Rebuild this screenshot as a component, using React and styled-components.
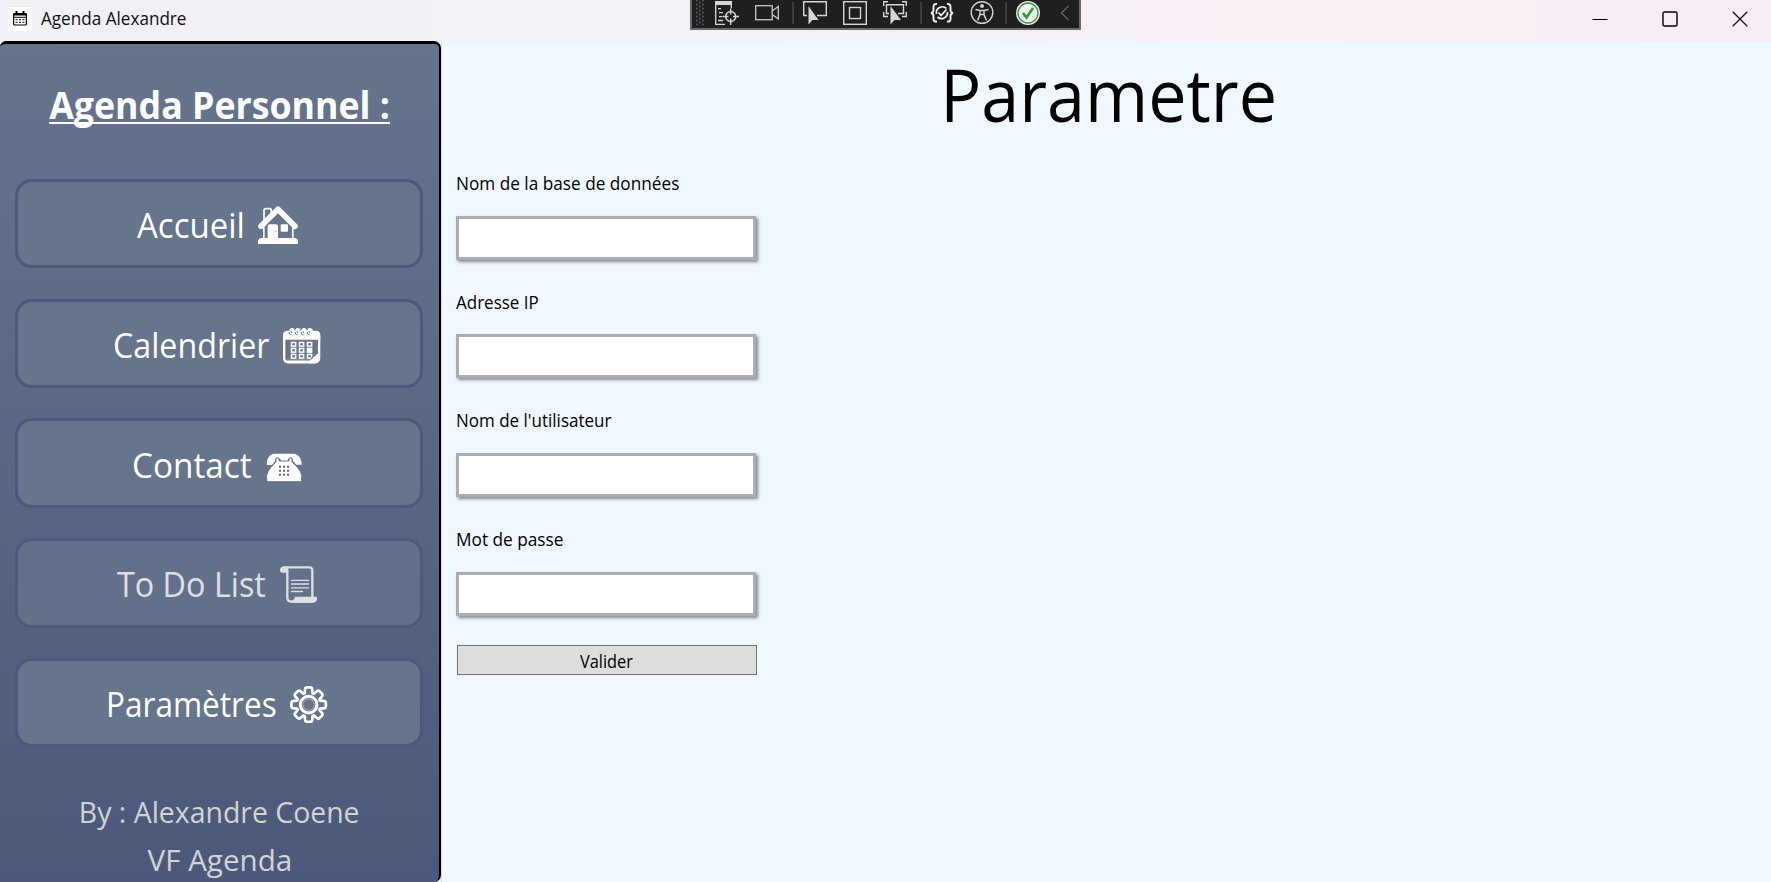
import React from "react";
import styled, { createGlobalStyle } from "styled-components";

const GlobalStyle = createGlobalStyle`
  *, *::before, *::after { box-sizing: border-box; }
  html, body, #root { height: 100%; margin: 0; }
  body {
    overflow: hidden;
    font-family: "Open Sans", "Noto Sans", sans-serif;
    color: #000;
  }
`;

const Window = styled.div`
  display: flex;
  flex-direction: column;
  height: 100vh;
  background: #f0f8ff;
`;

/* Narrows the letterforms without changing their height. */
const Condensed = styled.span`
  display: inline-block;
  white-space: nowrap;
  transform: scaleX(${(p) => p.$fit});
  transform-origin: ${(p) => p.$origin || "left"} center;
`;

/* ---------- title bar ---------- */

const TitleBar = styled.header`
  position: relative;
  flex: none;
  display: flex;
  align-items: center;
  height: 41px;
  padding: 0 21px 4px 8px;
  background: linear-gradient(90deg, #f2eff6 0%, #f3f0f7 55%, #faeef5 70%, #f9edf5 100%);
`;

const AppIcon = styled.span`
  display: grid;
  place-items: center;
  width: 24px;
  height: 24px;
  margin-right: 9px;
  background: #fff;
`;

const WindowTitle = styled.span`
  flex: 1;
  font-size: 17.6px;
  line-height: 35px;
  padding-bottom: 1px;
  color: #111;
`;

const WindowControls = styled.div`
  display: flex;
  align-items: center;
  gap: 54px;
  margin-right: 2px;
  svg { display: block; }
`;

/* ---------- debug toolbar ---------- */

const DebugToolbar = styled.div`
  position: absolute;
  top: 0;
  left: 690px;
  width: 391px;
  height: 30px;
  display: flex;
  align-items: flex-start;
  padding: 0 8.5px 0 4px;
  border: 2px solid #6b6b6b;
  border-top: 0;
  background: #1f1f1f;
  svg { display: block; }
`;

const Tool = styled.span`
  flex: none;
  width: ${(p) => p.$w || 24}px;
  margin-left: ${(p) => p.$gap || 0}px;
`;

const Divider = styled.span`
  flex: none;
  width: 2px;
  height: 22px;
  margin: 2px 0 0 ${(p) => p.$gap}px;
  background: #3d3d3d;
`;

/* ---------- sidebar ---------- */

const Body = styled.div`
  flex: 1;
  display: flex;
  min-height: 0;
`;

const Sidebar = styled.nav`
  flex: none;
  display: flex;
  flex-direction: column;
  width: 441px;
  padding: 31px 15px 0;
  border-top: 3px solid #000;
  border-right: 2px solid #000;
  border-radius: 6px 7px 7px 0;
  background: linear-gradient(180deg, #66758c 0%, #4c587b 100%);
`;

const Brand = styled.h1`
  margin: 0;
  font-size: 37px;
  font-weight: 700;
  line-height: 60px;
  text-align: center;
  color: #fff;
  span {
    text-decoration: underline;
    text-decoration-thickness: 2.4px;
    text-underline-offset: 2.6px;
    text-decoration-skip-ink: none;
  }
`;

const Menu = styled.div`
  display: flex;
  flex-direction: column;
  gap: 30.4px;
  margin-top: 43.8px;
`;

const MenuButton = styled.button`
  display: flex;
  align-items: center;
  justify-content: center;
  gap: 15px;
  width: 408px;
  height: 89.4px;
  padding: 3px 4px 0 0;
  border: 3px solid #4c587c;
  border-radius: 17px;
  background: #66758c;
  color: #fff;
  font: inherit;
  font-size: 35px;
  line-height: 48px;
  opacity: ${(p) => (p.$dimmed ? 0.8 : 1)};
  svg { display: block; flex: none; margin-top: ${(p) => p.$iconShift || 0}px; }
`;

const MenuLabel = styled.span`
  display: block;
  width: ${(p) => p.$w}px;
  text-align: left;
`;

const Credits = styled.footer`
  margin-top: 40.8px;
  font-size: 29px;
  line-height: 47.6px;
  text-align: center;
  color: #d3d3d3;
`;

const CreditLine = styled.div``;

/* ---------- settings page ---------- */

const Page = styled.main`
  flex: 1;
  display: flex;
  flex-direction: column;
  padding-left: 15px;
  border-left: 1px solid #d9dde2;
`;

const PageTitle = styled.h2`
  margin: 3px 0 0 -10px;
  font-size: 74px;
  font-weight: 400;
  line-height: 100px;
  text-align: center;
`;

const Form = styled.form`
  display: flex;
  flex-direction: column;
  width: 300px;
  margin-top: 28px;
`;

const Field = styled.label`
  display: block;
  height: 118.65px;
  margin-left: -0.6px;
  font-size: 17.6px;
  line-height: 23px;
`;

const Input = styled.input`
  display: block;
  width: 300px;
  height: 44px;
  margin-top: 20.8px;
  padding: 0 6px;
  border: 3px solid #abadb0;
  border-radius: 0;
  outline: 0;
  background: #fff;
  box-shadow: 2px 2px 3px rgba(60, 62, 70, 0.6);
  font: inherit;
`;

const SubmitButton = styled.button`
  height: 30px;
  margin-top: -1.6px;
  padding: 0 2px 0 0;
  border: 1px solid #707070;
  border-radius: 0;
  background: #ddd;
  font: inherit;
  font-size: 17.6px;
  line-height: 30px;
  color: #000;
`;

/* ---------- drawings ---------- */

const HouseIcon = () => (
  <svg width="40" height="38" viewBox="0 0 120 114" fill="none" stroke="#fff">
    <path d="M18 48V14q0-6 6-6h10q6 0 6 6v8" strokeWidth="5" />
    <path d="M17.5 56v42M104.500 56v42" strokeWidth="5" />
    <path d="M9 61L60 10L111 61" strokeWidth="17" strokeLinecap="round" strokeLinejoin="round" />
    <path d="M0 114v-8q0-7 8-10h104q8 3 8 10v8z" fill="#fff" stroke="none" />
    <path d="M29 98V61q0-6 6-6h19q6 0 6 6v37z" fill="#fff" stroke="none" />
    <rect x="68" y="55" width="22" height="22" rx="3" fill="#fff" stroke="none" />
    <circle cx="54" cy="76" r="1.600" fill="#66758c" stroke="none" />
  </svg>
);

const CalendarIcon = () => (
  <svg width="37.300" height="35.600" viewBox="0 0 112 107" fill="none" stroke="#fff">
    <rect x="3.500" y="14" width="105" height="89" rx="11" strokeWidth="7" />
    <path d="M0 35V20Q0 8 14 8H98Q112 8 112 20V35z" fill="#fff" stroke="none" />
    {[25, 43, 61, 79].map((x) => (
      <g key={x}>
        <circle cx={x + 2} cy="8" r="8" fill="#fff" stroke="none" />
        <path d={`M${x - 7} 12q0 8 8 9M${x - 1} 9q-1 3 3 7`} stroke="#66758c" strokeWidth="3" />
      </g>
    ))}
    {[32, 56, 80].map((x) =>
      [49, 67, 85].map((y) => (
        <rect
          key={`${x}-${y}`}
          x={x - 6.500}
          y={y - 5.500}
          width="12.500"
          height="11"
          strokeWidth="4.500"
          fill={x === 80 && y === 67 ? "#fff" : "none"}
        />
      ))
    )}
    <path d="M12 97H80" strokeWidth="2" />
    <path d="M78 106q4-17 14-25l16-4v18q-4 11-16 11z" fill="#fff" stroke="none" />
    <path d="M85 94q2-9 7-12q4 1 8-2q-8 4-15 14" fill="#66758c" stroke="#66758c" strokeWidth="3" />
  </svg>
);

const PhoneIcon = () => (
  <svg width="36" height="29" viewBox="0 0 108 87">
    <path d="M22 2H86Q106 8 107 35H90Q86 28 80 25V18H66V24H44V18H28V25Q22 30 18 36H2Q2 8 22 2z" fill="#fff" />
    <path d="M30 15h9v9h30v-9h9v12Q86 33 95 44Q107 58 107 68V82q0 4-4 4H6q-4 0-4-4V68Q2 58 14 44Q23 33 30 27z" fill="#fff" stroke="#66758c" strokeWidth="3" />
    {[43, 55, 67].map((x) =>
      [41, 53, 65].map((y) => (
        <rect key={`${x}-${y}`} x={x - 4} y={y - 3} width="6.500" height="6.500" fill="#66758c" />
      ))
    )}
  </svg>
);

const ScrollIcon = () => (
  <svg width="37" height="37" viewBox="0 0 111 111" fill="none" stroke="#fff" strokeWidth="7">
    <path d="M12 4H88Q97 4 97 14V94" />
    <path d="M22 10V94Q22 107 34 107H96Q108 107 108 96H47Q45 107 34 107" strokeLinejoin="round" />
    <path d="M12 1Q0 3 0 13Q1 20 6 20H24V6Q20 1 12 1z" fill="#fff" stroke="none" />
    <path d="M46 94H111Q111 110 97 110H34Q45 107 46 94z" fill="#fff" stroke="none" />
    <path d="M33 43H87M33 54H87M33 65.500H87M33 76.500H69" strokeWidth="3.800" />
  </svg>
);

const gearOutline = Array.from({ length: 8 }, (_, i) => {
  const at = (deg, r) => {
    const a = ((i * 45 + deg - 90) * Math.PI) / 180;
    return `${(56 + r * Math.cos(a)).toFixed(1)} ${(56 + r * Math.sin(a)).toFixed(1)}`;
  };
  return `${i ? "L" : "M"}${at(-19, 36)}L${at(-14, 46)}Q${at(-12, 52)} ${at(-6, 52)}L${at(6, 52)}Q${at(12, 52)} ${at(14, 46)}L${at(19, 36)}`;
}).join("") + "Z";

const GearIcon = () => (
  <svg width="37.300" height="37.300" viewBox="0 0 112 112" fill="none" stroke="#fff">
    <path d={gearOutline} strokeWidth="8" strokeLinejoin="round" />
    <circle cx="56" cy="56" r="25" strokeWidth="9" />
    <circle cx="56" cy="56" r="17" strokeWidth="1.200" />
  </svg>
);

const AppGlyph = () => (
  <svg width="14" height="15" viewBox="0 0 14 15" fill="none" stroke="#000">
    <rect x="0.600" y="2.500" width="12.800" height="11.500" rx="1" strokeWidth="1.200" />
    <path d="M0.500 3.500H13.500" strokeWidth="2" />
    <path d="M0.500 6.300H13.500" strokeWidth="1" />
    <path d="M3.500 0V3M10.500 0V3" strokeWidth="2" />
    <path d="M2.500 8.700H4.500M6 8.700H8M9.500 8.700H11.500M2.500 11.300H4.500M6 11.300H8M9.500 11.300H11.500" strokeWidth="1" />
  </svg>
);

const GripIcon = () => (
  <svg width="9" height="26" viewBox="0 0 9 26" fill="#5a5a5a">
    {Array.from({ length: 7 }, (_, r) => (
      <g key={r}>
        <rect x="0" y={r * 4 - 0.300} width="1.700" height="1.700" />
        <rect x="6" y={r * 4 - 0.300} width="1.700" height="1.700" />
        <rect x="3" y={r * 4 + 1.700} width="1.700" height="1.700" />
      </g>
    ))}
  </svg>
);

const LiveTreeIcon = () => (
  <svg width="24" height="26" viewBox="0 0 24 26" fill="none" stroke="#d6d6d6" strokeWidth="1.300">
    <path d="M0.700 4V24.300H10M16.300 4V8" />
    <rect x="0" y="1" width="17" height="4" fill="#d6d6d6" stroke="none" />
    <path d="M3 8.700H6M4 12.700H8M4 16.700H7M3 20.500H8" />
    <circle cx="15.700" cy="16.500" r="5" strokeWidth="1.500" />
    <path d="M15.700 8.500V14.500M15.700 18.500V25M7.500 16.500H13.500M18 16.500H24" strokeWidth="1.500" />
  </svg>
);

const CameraIcon = () => (
  <svg width="25" height="26" viewBox="0 0 25 26" fill="none" stroke="#c9c9c9" strokeWidth="1.300">
    <rect x="0.700" y="5.700" width="16.500" height="14" />
    <path d="M17.200 11L23.300 6.500V19L17.200 14.500" />
  </svg>
);

const SelectIcon = () => (
  <svg width="24" height="26" viewBox="0 0 24 26" fill="none" stroke="#d6d6d6" strokeWidth="1.400">
    <path d="M4 15.500H0.700V1.700H23.300V15.500H14" />
    <path d="M5.500 6V24.500L9.500 20H15.500z" fill="#d6d6d6" stroke="none" />
  </svg>
);

const BoundsIcon = () => (
  <svg width="24" height="26" viewBox="0 0 24 26" fill="none" stroke="#d6d6d6" strokeWidth="1.400">
    <rect x="0.700" y="1.700" width="22.600" height="22.600" />
    <rect x="6.500" y="7.500" width="11" height="11" />
  </svg>
);

const TrackIcon = () => (
  <svg width="24" height="26" viewBox="0 0 24 26" fill="none" stroke="#d6d6d6" strokeWidth="1.400">
    <path d="M0.700 6V1.700H5M19 1.700H23.300V6M23.300 12V16.500H19M0.700 12V16.500H5" />
    <path d="M6 13.500H3.500V4.700H20.500V13.500H15" />
    <path d="M7.500 6V24.500L11.500 20H18z" fill="#d6d6d6" stroke="none" />
  </svg>
);

const HotReloadIcon = () => (
  <svg width="24" height="26" viewBox="0 0 24 26" fill="none" stroke="#f2f2f2" strokeWidth="1.900">
    <path d="M7 4Q3.500 3.500 3.500 7V10Q3.500 12.500 1 13Q3.500 13.500 3.500 16V19Q3.500 22 7 21.500" />
    <path d="M17 4Q20.500 3.500 20.500 7V10Q20.500 12.500 23 13Q20.500 13.500 20.500 16V19Q20.500 22 17 21.500" />
    <path d="M16.500 8.500A6 6 0 0 0 6.500 14M7.500 17A6 6 0 0 0 17.500 12M8.500 12.500L11 15.500L16.500 9.500" strokeWidth="1.700" />
  </svg>
);

const AccessibilityIcon = () => (
  <svg width="24" height="26" viewBox="0 0 24 26" fill="none" stroke="#d0d0d0" strokeWidth="1.400">
    <circle cx="12" cy="12.500" r="10.800" />
    <circle cx="12" cy="6" r="2" fill="#d0d0d0" stroke="none" />
    <path d="M5.500 9.500L10 10.500H14L18.500 9.500M10 10.500V14.500L7.500 20.500M14 10.500V14.500L16.500 20.500M10 14.500H14" strokeWidth="1.500" />
  </svg>
);

const CheckIcon = () => (
  <svg width="24" height="26" viewBox="0 0 24 26" fill="none" stroke="#2f9a35">
    <circle cx="12" cy="13" r="12" fill="#f2f2f2" stroke="none" />
    <circle cx="12" cy="13" r="10" strokeWidth="1.400" />
    <path d="M7 13L10.500 17.500L17 8" strokeWidth="2.600" />
  </svg>
);

const ChevronIcon = () => (
  <svg width="10" height="26" viewBox="0 0 10 26" fill="none" stroke="#666" strokeWidth="1.300">
    <path d="M8.500 6L1.500 13L8.500 20" />
  </svg>
);

const MENU = [
  { text: "Accueil", width: 106, fit: 0.943, Icon: HouseIcon, shift: 1 },
  { text: "Calendrier", width: 155, fit: 0.921, Icon: CalendarIcon, shift: 2 },
  { text: "Contact", width: 119, fit: 0.951, Icon: PhoneIcon, shift: 5 },
  { text: "To Do List", width: 148, fit: 0.923, Icon: ScrollIcon, shift: 1, dimmed: true },
  { text: "Paramètres", width: 169, fit: 0.901, Icon: GearIcon, shift: 1 },
];

const FIELDS = [
  { text: "Nom de la base de données", fit: 0.978 },
  { text: "Adresse IP", fit: 0.966 },
  { text: "Nom de l'utilisateur", fit: 0.966 },
  { text: "Mot de passe", fit: 0.98, secret: true },
];

export default function App() {
  return (
    <Window>
      <GlobalStyle />
      <TitleBar>
        <AppIcon><AppGlyph /></AppIcon>
        <WindowTitle><Condensed $fit={0.973}>Agenda Alexandre</Condensed></WindowTitle>
        <WindowControls>
          <svg width="16" height="16" viewBox="0 0 16 16" stroke="#000" strokeWidth="1">
            <path d="M0.500 8.500H15.500" />
          </svg>
          <svg width="16" height="16" viewBox="0 0 16 16" fill="none" stroke="#000" strokeWidth="1.400">
            <rect x="1" y="1" width="14" height="14" rx="1.500" />
          </svg>
          <svg width="16" height="16" viewBox="0 0 16 16" stroke="#111" strokeWidth="1.300">
            <path d="M0.700 0.700L15.300 15.300M15.300 0.700L0.700 15.300" />
          </svg>
        </WindowControls>
        <DebugToolbar>
          <Tool $w={9}><GripIcon /></Tool>
          <Tool $gap={10}><LiveTreeIcon /></Tool>
          <Tool $gap={16}><CameraIcon /></Tool>
          <Divider $gap={13} />
          <Tool $gap={9}><SelectIcon /></Tool>
          <Tool $gap={16}><BoundsIcon /></Tool>
          <Tool $gap={16}><TrackIcon /></Tool>
          <Divider $gap={13} />
          <Tool $gap={8}><HotReloadIcon /></Tool>
          <Tool $gap={16}><AccessibilityIcon /></Tool>
          <Divider $gap={11} />
          <Tool $gap={9}><CheckIcon /></Tool>
          <Tool $gap={20} $w={10}><ChevronIcon /></Tool>
        </DebugToolbar>
      </TitleBar>
      <Body>
        <Sidebar>
          <Brand><Condensed $fit={0.965} $origin="center">Agenda Personnel :</Condensed></Brand>
          <Menu>
            {MENU.map(({ text, width, fit, Icon, shift, dimmed }) => (
              <MenuButton key={text} type="button" $dimmed={dimmed} $iconShift={shift}>
                <MenuLabel $w={width}>
                  <Condensed $fit={fit}>{text}</Condensed>
                </MenuLabel>
                <Icon />
              </MenuButton>
            ))}
          </Menu>
          <Credits>
            <CreditLine><Condensed $fit={0.98} $origin="center">By : Alexandre Coene</Condensed></CreditLine>
            <CreditLine><Condensed $fit={1.02} $origin="center">VF Agenda</Condensed></CreditLine>
          </Credits>
        </Sidebar>
        <Page>
          <PageTitle><Condensed $fit={0.922} $origin="center">Parametre</Condensed></PageTitle>
          <Form>
            {FIELDS.map(({ text, fit, secret }) => (
              <Field key={text}>
                <Condensed $fit={fit}>{text}</Condensed>
                <Input type={secret ? "password" : "text"} />
              </Field>
            ))}
            <SubmitButton type="button">
              <Condensed $fit={0.929} $origin="center">Valider</Condensed>
            </SubmitButton>
          </Form>
        </Page>
      </Body>
    </Window>
  );
}
